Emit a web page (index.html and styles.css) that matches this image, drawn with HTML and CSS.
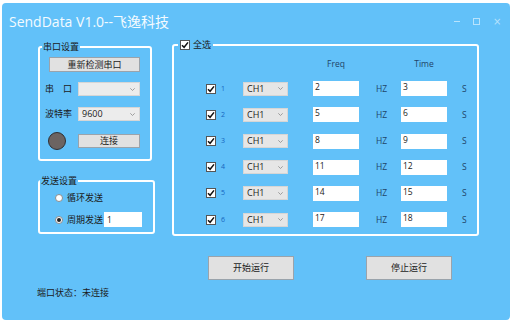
FILE: index.html
```html
<!DOCTYPE html>
<html>
<head>
<meta charset="utf-8">
<link rel="stylesheet" href="styles.css">
</head>
<body>
<div class="window">
  <div class="titlebar">
    <span class="title">SendData V1.0--飞逸科技</span>
    <span class="controls"><span class="min"></span><span class="max"></span><span class="close">×</span></span>
  </div>
  <div class="content">
    <div class="left">
      <fieldset class="group g-port">
        <legend>串口设置</legend>
        <div class="inner">
          <button class="btn btn-detect">重新检测串口</button>
          <div class="frow"><span class="flabel">串　口</span><span class="combo wide"><span class="val"></span><svg class="arrow" width="5" height="3" viewBox="0 0 5 3"><path d="M0.3 0.3 L2.5 2.5 L4.7 0.3" fill="none" stroke="#8a8a8a" stroke-width="0.8"/></svg></span></div>
          <div class="frow"><span class="flabel">波特率</span><span class="combo wide"><span class="val">9600</span><svg class="arrow" width="5" height="3" viewBox="0 0 5 3"><path d="M0.3 0.3 L2.5 2.5 L4.7 0.3" fill="none" stroke="#8a8a8a" stroke-width="0.8"/></svg></span></div>
          <div class="frow crow"><span class="lamp-cell"><span class="lamp"></span></span><button class="btn btn-connect">连接</button></div>
        </div>
      </fieldset>
      <fieldset class="group g-send">
        <legend>发送设置</legend>
        <div class="inner">
          <div class="rrow"><span class="radio"></span><span class="rtext">循环发送</span></div>
          <div class="rrow r2"><span class="radio on"></span><span class="rtext">周期发送</span><span class="tbox period">1</span></div>
        </div>
      </fieldset>
      <div class="status">端口状态：未连接</div>
    </div>
    <div class="right">
      <fieldset class="group g-data">
        <legend><span class="cb"><svg width="8" height="8" viewBox="0 0 8 8"><path d="M1 4.2 L3.1 6.3 L7 1.4" fill="none" stroke="#111" stroke-width="1.5"/></svg></span><span>全选</span></legend>
        <div class="grid">
          <span></span><span></span><span></span><span class="hdr">Freq</span><span></span><span class="hdr">Time</span><span></span>

          <span class="cb"><svg width="8" height="8" viewBox="0 0 8 8"><path d="M1 4.2 L3.1 6.3 L7 1.4" fill="none" stroke="#111" stroke-width="1.5"/></svg></span><span class="num">1</span><span class="combo ch"><span class="val">CH1</span><svg class="arrow" width="5" height="3" viewBox="0 0 5 3"><path d="M0.3 0.3 L2.5 2.5 L4.7 0.3" fill="none" stroke="#8a8a8a" stroke-width="0.8"/></svg></span><span class="tbox val-box">2</span><span class="unit">HZ</span><span class="tbox val-box">3</span><span class="unit">S</span>

          <span class="cb"><svg width="8" height="8" viewBox="0 0 8 8"><path d="M1 4.2 L3.1 6.3 L7 1.4" fill="none" stroke="#111" stroke-width="1.5"/></svg></span><span class="num">2</span><span class="combo ch"><span class="val">CH1</span><svg class="arrow" width="5" height="3" viewBox="0 0 5 3"><path d="M0.3 0.3 L2.5 2.5 L4.7 0.3" fill="none" stroke="#8a8a8a" stroke-width="0.8"/></svg></span><span class="tbox val-box">5</span><span class="unit">HZ</span><span class="tbox val-box">6</span><span class="unit">S</span>

          <span class="cb"><svg width="8" height="8" viewBox="0 0 8 8"><path d="M1 4.2 L3.1 6.3 L7 1.4" fill="none" stroke="#111" stroke-width="1.5"/></svg></span><span class="num">3</span><span class="combo ch"><span class="val">CH1</span><svg class="arrow" width="5" height="3" viewBox="0 0 5 3"><path d="M0.3 0.3 L2.5 2.5 L4.7 0.3" fill="none" stroke="#8a8a8a" stroke-width="0.8"/></svg></span><span class="tbox val-box">8</span><span class="unit">HZ</span><span class="tbox val-box">9</span><span class="unit">S</span>

          <span class="cb"><svg width="8" height="8" viewBox="0 0 8 8"><path d="M1 4.2 L3.1 6.3 L7 1.4" fill="none" stroke="#111" stroke-width="1.5"/></svg></span><span class="num">4</span><span class="combo ch"><span class="val">CH1</span><svg class="arrow" width="5" height="3" viewBox="0 0 5 3"><path d="M0.3 0.3 L2.5 2.5 L4.7 0.3" fill="none" stroke="#8a8a8a" stroke-width="0.8"/></svg></span><span class="tbox val-box">11</span><span class="unit">HZ</span><span class="tbox val-box">12</span><span class="unit">S</span>

          <span class="cb"><svg width="8" height="8" viewBox="0 0 8 8"><path d="M1 4.2 L3.1 6.3 L7 1.4" fill="none" stroke="#111" stroke-width="1.5"/></svg></span><span class="num">5</span><span class="combo ch"><span class="val">CH1</span><svg class="arrow" width="5" height="3" viewBox="0 0 5 3"><path d="M0.3 0.3 L2.5 2.5 L4.7 0.3" fill="none" stroke="#8a8a8a" stroke-width="0.8"/></svg></span><span class="tbox val-box">14</span><span class="unit">HZ</span><span class="tbox val-box">15</span><span class="unit">S</span>

          <span class="cb"><svg width="8" height="8" viewBox="0 0 8 8"><path d="M1 4.2 L3.1 6.3 L7 1.4" fill="none" stroke="#111" stroke-width="1.5"/></svg></span><span class="num">6</span><span class="combo ch"><span class="val">CH1</span><svg class="arrow" width="5" height="3" viewBox="0 0 5 3"><path d="M0.3 0.3 L2.5 2.5 L4.7 0.3" fill="none" stroke="#8a8a8a" stroke-width="0.8"/></svg></span><span class="tbox val-box">17</span><span class="unit">HZ</span><span class="tbox val-box">18</span><span class="unit">S</span>
        </div>
      </fieldset>
      <div class="actions">
        <button class="btn btn-big">开始运行</button>
        <button class="btn btn-big">停止运行</button>
      </div>
    </div>
  </div>
</div>
</body>
</html>
```
FILE: styles.css
```css
* { box-sizing: border-box; }
body {
  margin: 0;
  background: #fff;
  font-family: "Noto Sans CJK SC", "Open Sans", sans-serif;
  font-size: 9px;
  line-height: 12px;
  color: #1b1b1b;
}
.window {
  margin: 3px 0 0 2px;
  width: 508px;
  height: 317px;
  background: #62c1f9;
  border-radius: 4px;
  overflow: hidden;
}
.titlebar {
  height: 35px;
  display: flex;
  align-items: center;
  justify-content: space-between;
  padding: 2px 10px 0 7px;
}
.title {
  font-family: "Open Sans", "Noto Sans CJK SC", sans-serif;
  font-size: 14px;
  line-height: 20px;
  color: #f4fbff;
}
.controls {
  display: flex;
  align-items: center;
  gap: 13px;
  color: rgba(255, 255, 255, 0.55);
}
.min { flex: none; width: 6px; height: 1px; background: rgba(255, 255, 255, 0.55); }
.max { flex: none; width: 7px; height: 7px; border: 1px solid rgba(255, 255, 255, 0.55); }
.close { flex: none; width: 7px; font-size: 10px; line-height: 10px; font-family: "DejaVu Sans", sans-serif; }

.content { display: flex; padding-left: 36px; gap: 17px; }
.left { width: 117px; display: flex; flex-direction: column; align-items: flex-start; }

.group {
  margin: 0;
  padding: 0;
  border: 2px solid #fff;
  border-radius: 3px;
  min-width: 0;
}
legend {
  padding: 0 1px;
  font-size: 9px;
  line-height: 12px;
  color: #1b1b1b;
}

.g-port { width: 114px; margin-top: 3px; }
.g-port legend { margin-left: 2px; }
.g-port .inner { padding: 4px 8px 9px 5px; }

.btn {
  font-family: "Noto Sans CJK SC", sans-serif;
  font-size: 9px;
  line-height: 12px;
  color: #1b1b1b;
  background: #e1e1e1;
  border: 1px solid #9aa3ab;
  padding: 0;
  display: flex;
  align-items: center;
  justify-content: center;
}
.btn-detect { margin-left: 4px; width: 91px; height: 15px; }
.frow { display: flex; align-items: center; height: 14px; margin-top: 11px; }
.g-port .btn-detect + .frow { margin-top: 10px; }
.flabel { width: 33px; }
.combo {
  display: flex;
  align-items: center;
  justify-content: space-between;
  background: #e6e6e6;
  border: 1px solid #d6d6d6;
  height: 14px;
  padding: 0 4px 0 3px;
  font-family: "Open Sans", sans-serif;
  font-size: 9px;
  color: #1b1b1b;
}
.combo.wide { width: 62px; background: #ececec; }
.crow { height: 18px; }
.lamp-cell { width: 33px; display: flex; }
.lamp {
  margin-left: 3px;
  width: 18px;
  height: 18px;
  border-radius: 50%;
  background: #6c6462;
  border: 1.5px solid #2f2f33;
}
.btn-connect { width: 62px; height: 14px; }

.g-send { width: 117px; margin-top: 14px; }
.g-send legend { margin-left: 0; }
.g-send .inner { padding: 4px 4px 5px 15px; }
.rrow { display: flex; align-items: center; height: 14px; }
.rrow.r2 { height: 15px; margin-top: 7px; }
.radio {
  width: 8px;
  height: 8px;
  border-radius: 50%;
  background: #fff;
  border: 1px solid #8c8c8c;
  display: flex;
  align-items: center;
  justify-content: center;
}
.radio.on::after {
  content: "";
  width: 4px;
  height: 4px;
  border-radius: 50%;
  background: #222;
}
.rtext { margin-left: 4px; }
.tbox {
  background: #fff;
  font-family: "Open Sans", sans-serif;
  font-size: 8.5px;
  line-height: 11px;
  color: #222;
}
.period { margin-left: 1px; width: 38px; height: 15px; padding: 2px 3px; }
.status { margin-top: 53px; margin-left: -1px; }

.right { display: flex; flex-direction: column; align-items: flex-start; }
.g-data { width: 307px; margin-top: 1px; }
.g-data legend { margin-left: 4px; padding: 0 2px 0 2px; display: flex; align-items: center; gap: 3px; }
.cb {
  width: 10px;
  height: 10px;
  background: #fff;
  border: 1px solid #555;
  display: flex;
  align-items: center;
  justify-content: center;
}
.grid {
  display: grid;
  grid-template-columns: 15px 22px 70px 63px 25px 61px auto;
  grid-template-rows: 12px repeat(6, 15px);
  row-gap: 11.2px;
  align-items: center;
  padding: 7px 0 7px 32px;
}
.hdr {
  font-family: "Open Sans", sans-serif;
  font-size: 8.5px;
  color: #1f4468;
  width: 46px;
  text-align: center;
}
.num {
  font-family: "Open Sans", sans-serif;
  font-size: 7px;
  color: #1565c0;
}
.combo.ch { width: 45px; }
.val-box { width: 46px; height: 15px; padding: 0 2px; }
.unit {
  font-family: "Open Sans", sans-serif;
  font-size: 8.5px;
  color: #1f4468;
}
.actions { display: flex; gap: 72px; margin: 20px 0 0 36px; }
.btn-big { width: 86px; height: 24px; }
```
